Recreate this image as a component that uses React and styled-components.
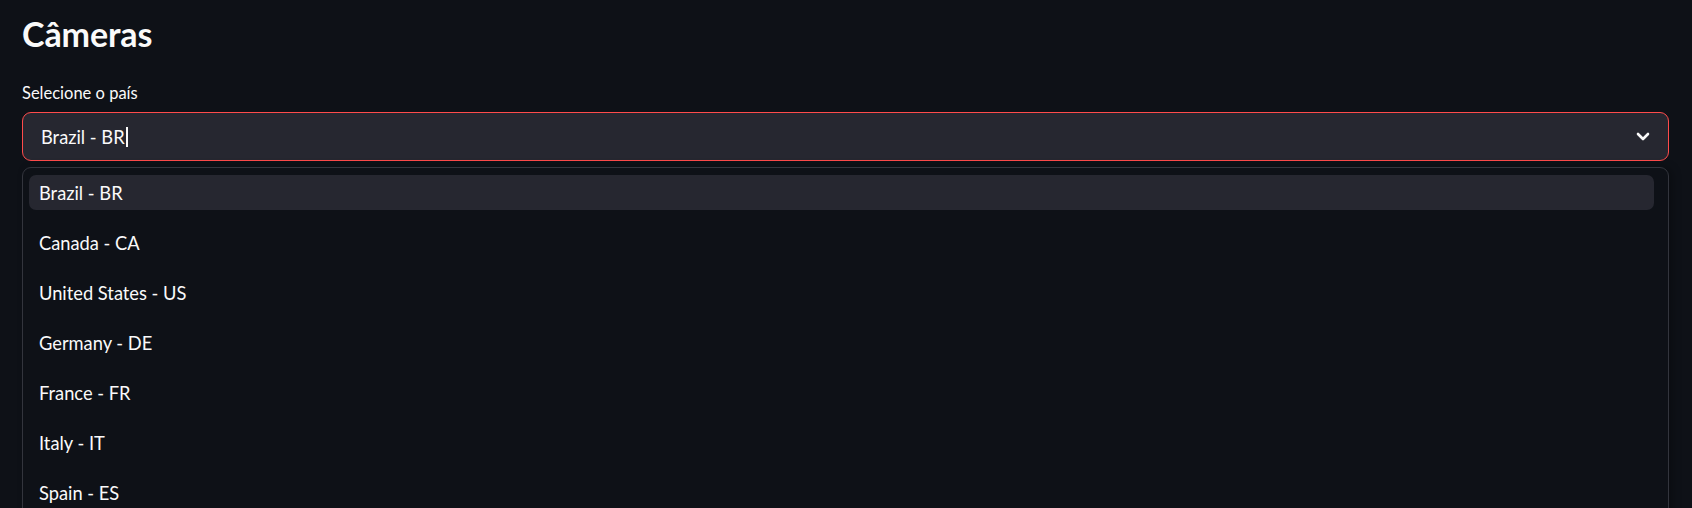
import React, { useState } from 'react';
import styled, { createGlobalStyle } from 'styled-components';

const GlobalStyle = createGlobalStyle`
  body {
    margin: 0;
    background: #0e1117;
    color: #fafafa;
    font-family: 'Lato', 'Noto Sans', sans-serif;
    overflow: hidden;
  }
`;

const Page = styled.div`
  padding: 14px 23px 0 22px;
  height: 508px;
  box-sizing: border-box;
  overflow: hidden;
`;

const Title = styled.h3`
  margin: 0;
  font-size: 34px;
  font-weight: 700;
  line-height: 40px;
  letter-spacing: -0.1px;
`;

const Label = styled.label`
  display: block;
  margin-top: 28px;
  font-size: 16.5px;
  line-height: 22px;
`;

const SelectBox = styled.div`
  margin-top: 8px;
  height: 49px;
  box-sizing: border-box;
  border: 1px solid ${({ focused }) => (focused ? '#ff4b4b' : '#262730')};
  border-radius: 9px;
  background: #262730;
  display: flex;
  align-items: center;
  justify-content: space-between;
  padding: 0 18px 0 18px;
  font-size: 18.3px;
`;

const Value = styled.span`
  display: flex;
  align-items: center;
`;

const Caret = styled.span`
  display: inline-block;
  width: 2px;
  height: 20px;
  margin-left: 1px;
  background: #fafafa;
`;

const Menu = styled.div`
  margin-top: 6px;
  border: 1px solid #33353d;
  border-radius: 9px;
  background: #0e1117;
  padding: 7px 14px 0 6px;
  height: 360px;
  box-shadow: 4px 0 8px rgba(0, 0, 0, 0.25);
`;

const Option = styled.div`
  height: 35px;
  margin-bottom: 15px;
  padding: 0 10px;
  display: flex;
  align-items: center;
  border-radius: 7px;
  font-size: 18.3px;
  background: ${({ active }) => (active ? '#262730' : 'transparent')};
  cursor: pointer;
`;

const countries = [
  'Brazil - BR',
  'Canada - CA',
  'United States - US',
  'Germany - DE',
  'France - FR',
  'Italy - IT',
  'Spain - ES',
];

const Chevron = () => (
  <svg width="14" height="9" viewBox="0 0 14 9" fill="none">
    <path d="M2 2l5 5 5-5" stroke="#fafafa" strokeWidth="2.6" strokeLinecap="round" strokeLinejoin="round" />
  </svg>
);

const App = () => {
  const [selected, setSelected] = useState(0);

  return (
    <>
      <GlobalStyle />
      <Page>
        <Title>Câmeras</Title>
        <Label>Selecione o país</Label>
        <SelectBox focused>
          <Value>
            {countries[selected]}
            <Caret />
          </Value>
          <Chevron />
        </SelectBox>
        <Menu>
          {countries.map((c, i) => (
            <Option key={c} active={i === selected} onClick={() => setSelected(i)}>
              {c}
            </Option>
          ))}
        </Menu>
      </Page>
    </>
  );
};

export default App;
